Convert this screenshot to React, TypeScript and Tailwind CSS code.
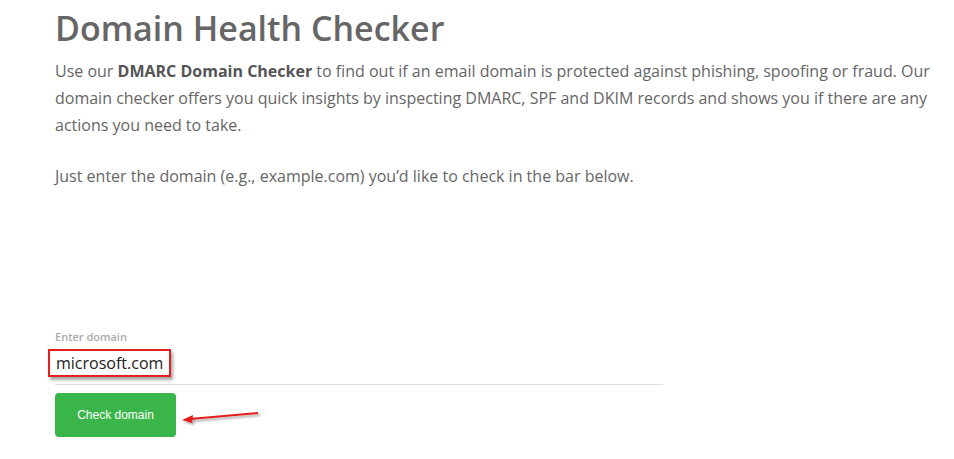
export default function App() {
  return (
    <div className="relative min-h-[459px] bg-white font-['Open_Sans',sans-serif] text-[#666]">
      <div className="pl-[55px] pr-[20px] pt-[6px]">
        <h1 className="text-[34px] leading-[44px] font-semibold text-[#666]">Domain Health Checker</h1>
        <p className="mt-[8px] w-[880px] text-[16px] leading-[27px]">
          Use our <strong className="font-bold text-[#555]">DMARC Domain Checker</strong> to find out if an email domain is
          protected against phishing, spoofing or fraud. Our domain checker offers you quick insights by inspecting DMARC,
          SPF and DKIM records and shows you if there are any actions you need to take.
        </p>
        <p className="mt-[24px] text-[16px] leading-[27px]">
          Just enter the domain (e.g., example.com) you’d like to check in the bar below.
        </p>

        <div className="mt-[140px] w-[608px]">
          <label className="block text-[11px] leading-[14px] font-semibold text-[#aaa]">Enter domain</label>
          <div className="mt-[5px] border-b border-[#ddd] pb-[7px]">
            <span className="-ml-[7px] inline-block border-2 border-[#e41e1e] bg-white px-[6px] text-[16px] leading-[24px] text-[#222] shadow-[2px_3px_3px_rgba(0,0,0,0.35)]">
              microsoft.com
            </span>
          </div>
          <button className="mt-[8px] h-[44px] w-[121px] rounded-[4px] bg-[#3ab54a] font-['Liberation_Sans',Arial,sans-serif] text-[12px] text-white">
            Check domain
          </button>
        </div>
      </div>

      {/* annotation arrow */}
      <svg className="absolute left-[178px] top-[404px]" width="90" height="26" viewBox="0 0 90 26">
        <defs>
          <filter id="sh" x="-20%" y="-50%" width="140%" height="200%">
            <feDropShadow dx="2" dy="2" stdDeviation="1.2" floodColor="#000" floodOpacity="0.35" />
          </filter>
        </defs>
        <g filter="url(#sh)">
          <line x1="80" y1="9" x2="12" y2="15" stroke="#e41e1e" strokeWidth="2" />
          <polygon points="4,16 15,11 14,19" fill="#e41e1e" />
        </g>
      </svg>
    </div>
  );
}
